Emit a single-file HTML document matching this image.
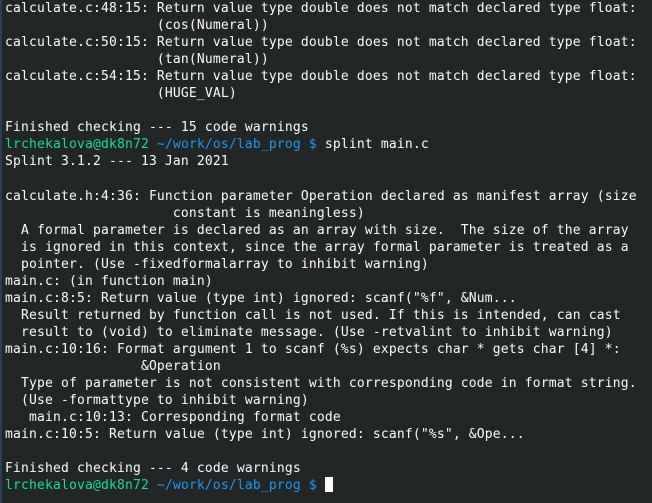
<!DOCTYPE html>
<html><head><style>
html,body{margin:0;padding:0;}
body{width:652px;height:503px;background:#232627;overflow:hidden;position:relative;}
pre{margin:0;position:absolute;left:5px;top:0px;font-family:"DejaVu Sans Mono","Liberation Mono",monospace;font-size:13px;line-height:17.04px;color:#fcfcfc;letter-spacing:0.17px;}
.g{color:#1cdc9a;}.b{color:#1d99f3;}
.cur{display:inline-block;width:8px;height:15px;background:#fcfcfc;vertical-align:-3px;}
.edge{position:absolute;left:0;top:0;width:2px;height:503px;background:#2c3e57;}
</style></head><body><div class="edge"></div><pre>calculate.c:48:15: Return value type double does not match declared type float:
                   (cos(Numeral))
calculate.c:50:15: Return value type double does not match declared type float:
                   (tan(Numeral))
calculate.c:54:15: Return value type double does not match declared type float:
                   (HUGE_VAL)

Finished checking --- 15 code warnings
<span class="g">lrchekalova@dk8n72</span> <span class="b">~/work/os/lab_prog $</span> splint main.c
Splint 3.1.2 --- 13 Jan 2021

calculate.h:4:36: Function parameter Operation declared as manifest array (size
                     constant is meaningless)
  A formal parameter is declared as an array with size.  The size of the array
  is ignored in this context, since the array formal parameter is treated as a
  pointer. (Use -fixedformalarray to inhibit warning)
main.c: (in function main)
main.c:8:5: Return value (type int) ignored: scanf("%f", &amp;Num...
  Result returned by function call is not used. If this is intended, can cast
  result to (void) to eliminate message. (Use -retvalint to inhibit warning)
main.c:10:16: Format argument 1 to scanf (%s) expects char * gets char [4] *:
                 &amp;Operation
  Type of parameter is not consistent with corresponding code in format string.
  (Use -formattype to inhibit warning)
   main.c:10:13: Corresponding format code
main.c:10:5: Return value (type int) ignored: scanf("%s", &amp;Ope...

Finished checking --- 4 code warnings
<span class="g">lrchekalova@dk8n72</span> <span class="b">~/work/os/lab_prog $</span> <span class="cur"></span></pre></body></html>
